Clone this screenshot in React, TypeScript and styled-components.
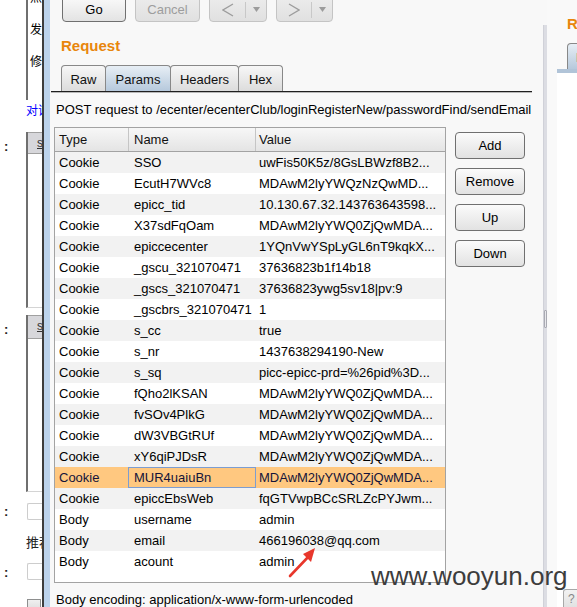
import React from "react";
import styled, { createGlobalStyle } from "styled-components";

const Global = createGlobalStyle`
  html, body { margin: 0; padding: 0; background: #fff; }
  body { font-family: "Liberation Sans", Arial, sans-serif; }
`;

const Root = styled.div`
  position: relative;
  width: 577px;
  height: 607px;
  overflow: hidden;
  display: flex;
  font-family: "Liberation Sans", Arial, sans-serif;
  font-size: 13px;
  color: #000;
  background: #fff;
`;

/* ---------- left strip (web page behind the window) ---------- */
const LeftStrip = styled.div`
  width: 42px;
  flex: none;
  display: flex;
  flex-direction: column;
  overflow: hidden;
  background: #fff;
`;

const TopBox = styled.div`
  margin-left: 26px;
  height: 100px;
  flex: none;
  box-sizing: border-box;
  border-left: 2px solid #6f6f6f;
  padding-left: 2px;
  overflow: hidden;
  font-family: "Noto Sans CJK SC", sans-serif;
  font-size: 12px;
  line-height: 32px;
`;

const CharColumn = styled.div`
  margin-top: -19px;
  display: flex;
  flex-direction: column;
`;

const PageLink = styled.div`
  margin: 2px 0 0 26px;
  line-height: 16px;
  white-space: nowrap;
  color: #0000ff;
  font-family: "Noto Sans CJK SC", sans-serif;
  font-size: 12px;
`;

const FieldRow = styled.div<{ $top: number }>`
  display: flex;
  flex: none;
  margin-top: ${(p) => p.$top}px;
`;

const Colon = styled.div<{ $top: number }>`
  width: 26px;
  flex: none;
  box-sizing: border-box;
  padding-left: 4px;
  margin-top: ${(p) => p.$top}px;
  line-height: 16px;
  font-weight: bold;
  color: #222;
`;

const PanelBox = styled.div<{ $h: number }>`
  flex: 1;
  height: ${(p) => p.$h}px;
  box-sizing: border-box;
  border-left: 2px solid #6f6f6f;
  border-bottom: 1px solid #d4d4d4;
  background: #fff;
`;

const PanelHead = styled.div<{ $h: number }>`
  height: ${(p) => p.$h}px;
  box-sizing: border-box;
  background: #d7d7db;
  border-top: 1px solid #a0a0a0;
  border-bottom: 1px solid #a0a0a0;
  padding-left: 9px;
  font-size: 12px;
  line-height: 20px;
  color: #333;
  text-decoration: underline;
`;

const PageInput = styled.div`
  flex: 1;
  height: 17px;
  box-sizing: border-box;
  margin-left: 1px;
  border: 1px solid #cdcdcd;
  border-right: none;
  border-radius: 2px 0 0 2px;
  background: #fff;
`;

const PageText = styled.div`
  margin: 14px 0 0 26px;
  line-height: 16px;
  white-space: nowrap;
  font-family: "Noto Sans CJK SC", sans-serif;
  font-size: 13px;
  color: #222;
`;

const PageCheck = styled.div`
  margin: 18px 0 0 27px;
  width: 12px;
  height: 12px;
  flex: none;
  border: 1px solid #8e8f8f;
  background: linear-gradient(#f0f0f0, #dadada);
`;

/* ---------- Burp window ---------- */
const Frame = styled.div`
  flex: 1;
  display: flex;
  border-left: 2px solid #3d3d3d;
`;

const FrameEdge = styled.div`
  width: 6px;
  flex: none;
  background: #bcd3ec;
`;

const Workspace = styled.div`
  flex: 1;
  display: flex;
  background: #f8f8f8;
`;

const RequestPane = styled.div`
  width: 493px;
  flex: none;
  display: flex;
  flex-direction: column;
`;

const Toolbar = styled.div`
  height: 22px;
  flex: none;
  display: flex;
  align-items: flex-end;
  gap: 9px;
  padding-left: 12px;
`;

const ToolButton = styled.div<{ $w: number; $disabled?: boolean }>`
  width: ${(p) => p.$w}px;
  height: 26px;
  margin-top: -4px;
  box-sizing: border-box;
  display: flex;
  align-items: center;
  justify-content: center;
  border-radius: 4px;
  border: 1px solid ${(p) => (p.$disabled ? "#c4c4c4" : "#707070")};
  background: ${(p) =>
    p.$disabled
      ? "linear-gradient(#ececec, #e0e0e0)"
      : "linear-gradient(#fafafa, #e3e3e3)"};
  color: ${(p) => (p.$disabled ? "#9d9d9d" : "#000")};
  font-size: 13px;
  padding-top: 1px;
`;

const NavPart = styled.div<{ $main?: boolean }>`
  height: 100%;
  display: flex;
  align-items: center;
  justify-content: center;
  flex: ${(p) => (p.$main ? 1 : "none")};
  width: ${(p) => (p.$main ? "auto" : "21px")};
  border-left: ${(p) => (p.$main ? "none" : "1px solid #c8c8c8")};
  box-sizing: border-box;
  height: 16px;
`;

const PaneTitle = styled.div<{ $pad: number }>`
  margin-top: 15px;
  padding-left: ${(p) => p.$pad}px;
  height: 18px;
  line-height: 18px;
  font-size: 15px;
  font-weight: bold;
  color: #e8860c;
  white-space: nowrap;
`;

const TabStrip = styled.div`
  margin: 10px 11px 0 1px;
  padding-left: 10px;
  display: flex;
  align-items: flex-end;
  border-bottom: 1px solid #1f1f1f;
  box-shadow: 0 1px 0 #b8b8b8;
`;

const Tab = styled.div<{ $w: number; $active?: boolean }>`
  width: ${(p) => p.$w}px;
  height: 26px;
  box-sizing: border-box;
  margin-right: -1px;
  border: 1px solid #888;
  border-bottom: none;
  border-radius: 4px 4px 0 0;
  background: ${(p) =>
    p.$active
      ? "linear-gradient(#e7eef5, #b6c9dc)"
      : "linear-gradient(#f7f7f7, #dcdcdc)"};
  display: flex;
  align-items: center;
  justify-content: center;
  font-size: 13px;
  color: #111;
  padding-top: 1px;
`;

const Content = styled.div`
  margin-left: 1px;
  width: 481px;
  padding: 10px 0 0 3px;
  box-sizing: border-box;
  display: flex;
  flex-direction: column;
`;

const InfoLine = styled.div<{ $top?: number }>`
  margin-left: 2px;
  margin-top: ${(p) => p.$top ?? 0}px;
  line-height: 16px;
  white-space: nowrap;
  color: #000;
`;

const TableArea = styled.div`
  margin-top: 9px;
  display: flex;
  align-items: flex-start;
`;

const Table = styled.div`
  width: 392px;
  height: 456px;
  flex: none;
  box-sizing: border-box;
  border: 1px solid #a3a3a3;
  background: #fff;
  overflow: hidden;
`;

const cols = "74px 127px 1fr";

const HeadRow = styled.div`
  display: grid;
  grid-template-columns: ${cols};
  height: 24px;
  box-sizing: border-box;
  border-bottom: 1px solid #a3a3a3;
  background: linear-gradient(#f7f7f7, #e4e4e4);
`;

const HeadCell = styled.div<{ $last?: boolean; $pad: number }>`
  display: flex;
  align-items: center;
  padding-left: ${(p) => p.$pad}px;
  border-right: ${(p) => (p.$last ? "none" : "1px solid #c5c5c5")};
  color: #111;
`;

const Row = styled.div<{ $alt: boolean; $sel?: boolean }>`
  display: grid;
  grid-template-columns: ${cols};
  height: 21px;
  background: ${(p) => (p.$sel ? "#ffc880" : p.$alt ? "#f2f2f2" : "#ffffff")};
  color: ${(p) => (p.$sel ? "#14143a" : "#000")};
`;

const Cell = styled.div<{ $pad: number; $focus?: boolean }>`
  display: flex;
  align-items: center;
  padding-left: ${(p) => p.$pad}px;
  white-space: nowrap;
  overflow: hidden;
  box-sizing: border-box;
  border: ${(p) => (p.$focus ? "1px solid #7d9dd0" : "none")};
  margin-left: ${(p) => (p.$focus ? "-1px" : "0")};
`;

const SideButtons = styled.div`
  margin: 5px 0 0 9px;
  display: flex;
  flex-direction: column;
  gap: 9px;
`;

const SideButton = styled.div`
  width: 70px;
  height: 27px;
  box-sizing: border-box;
  border: 1px solid #707070;
  border-radius: 4px;
  background: linear-gradient(#fbfbfb, #e2e2e2);
  display: flex;
  align-items: center;
  justify-content: center;
  font-size: 13px;
  color: #000;
`;

const Splitter = styled.div`
  width: 4px;
  flex: none;
  margin-top: 25px;
  box-sizing: border-box;
  background: #dcdde3;
  border-left: 1px solid #d0d1d8;
  display: flex;
  flex-direction: column;
  align-items: center;
`;

const SplitThumb = styled.div`
  margin-top: 285px;
  width: 3px;
  height: 18px;
  box-sizing: border-box;
  border: 1px solid #a9aab2;
  border-radius: 1px;
  background: #e8e8ec;
`;

const ResponsePane = styled.div`
  flex: 1;
  display: flex;
  flex-direction: column;
  background: #f9f9f9;
  overflow: hidden;
`;

const RespTabs = styled.div`
  margin: 10px 0 0 10px;
  padding-left: 10px;
  display: flex;
  border-bottom: 4px solid #b1c4d8;
`;

const RespBody = styled.div`
  margin-left: 10px;
  flex: 1;
  background: #fff;
  display: flex;
  flex-direction: column;
`;

const CornerButton = styled.div`
  margin: auto 0 0 6px;
  width: 40px;
  height: 18px;
  box-sizing: border-box;
  border: 1px solid #a8a8a8;
  border-bottom: none;
  border-radius: 3px 0 0 0;
  background: linear-gradient(#f2f2f2, #e2e2e2);
  color: #888;
  font-size: 12px;
  padding: 2px 0 0 4px;
`;

/* ---------- overlays ---------- */
const Watermark = styled.div`
  position: absolute;
  left: 371px;
  top: 561px;
  font-family: "Liberation Sans", Arial, sans-serif;
  font-size: 26px;
  line-height: 30px;
  color: #3d3d3d;
  white-space: nowrap;
  pointer-events: none;
`;

const ArrowSvg = styled.svg`
  position: absolute;
  left: 284px;
  top: 543px;
`;

type Param = { t: string; n: string; v: string };

const rows: Param[] = [
  { t: "Cookie", n: "SSO", v: "uwFis50K5z/8GsLBWzf8B2..." },
  { t: "Cookie", n: "EcutH7WVc8", v: "MDAwM2lyYWQzNzQwMD..." },
  { t: "Cookie", n: "epicc_tid", v: "10.130.67.32.143763643598..." },
  { t: "Cookie", n: "X37sdFqOam", v: "MDAwM2lyYWQ0ZjQwMDA..." },
  { t: "Cookie", n: "epiccecenter", v: "1YQnVwYSpLyGL6nT9kqkX..." },
  { t: "Cookie", n: "_gscu_321070471", v: "37636823b1f14b18" },
  { t: "Cookie", n: "_gscs_321070471", v: "37636823ywg5sv18|pv:9" },
  { t: "Cookie", n: "_gscbrs_321070471", v: "1" },
  { t: "Cookie", n: "s_cc", v: "true" },
  { t: "Cookie", n: "s_nr", v: "1437638294190-New" },
  { t: "Cookie", n: "s_sq", v: "picc-epicc-prd=%26pid%3D..." },
  { t: "Cookie", n: "fQho2lKSAN", v: "MDAwM2lyYWQ0ZjQwMDA..." },
  { t: "Cookie", n: "fvSOv4PlkG", v: "MDAwM2lyYWQ0ZjQwMDA..." },
  { t: "Cookie", n: "dW3VBGtRUf", v: "MDAwM2lyYWQ0ZjQwMDA..." },
  { t: "Cookie", n: "xY6qiPJDsR", v: "MDAwM2lyYWQ0ZjQwMDA..." },
  { t: "Cookie", n: "MUR4uaiuBn", v: "MDAwM2lyYWQ0ZjQwMDA..." },
  { t: "Cookie", n: "epiccEbsWeb", v: "fqGTVwpBCcSRLZcPYJwm..." },
  { t: "Body", n: "username", v: "admin" },
  { t: "Body", n: "email", v: "466196038@qq.com" },
  { t: "Body", n: "acount", v: "admin" },
];

const SELECTED = 15;

const Chevron = ({ dir }: { dir: "l" | "r" }) => (
  <svg width="12" height="14" viewBox="0 0 12 14">
    <polyline
      points={dir === "l" ? "11,1 1,7 11,13" : "1,1 11,7 1,13"}
      fill="none"
      stroke="#9c9c9c"
      strokeWidth="1.3"
    />
  </svg>
);

const Caret = () => (
  <svg width="7" height="5" viewBox="0 0 7 5">
    <polygon points="0,0 7,0 3.5,5" fill="#9c9c9c" />
  </svg>
);

export default function App() {
  return (
    <Root>
      <Global />
      <LeftStrip>
        <TopBox>
          <CharColumn>
            <span>点</span>
            <span>发</span>
            <span>修</span>
          </CharColumn>
        </TopBox>
        <PageLink>对话框</PageLink>
        <FieldRow $top={14}>
          <Colon $top={7}>:</Colon>
          <PanelBox $h={176}>
            <PanelHead $h={22}>s</PanelHead>
          </PanelBox>
        </FieldRow>
        <FieldRow $top={7}>
          <Colon $top={7}>:</Colon>
          <PanelBox $h={177}>
            <PanelHead $h={24}>s</PanelHead>
          </PanelBox>
        </FieldRow>
        <FieldRow $top={11}>
          <Colon $top={1}>:</Colon>
          <PageInput />
        </FieldRow>
        <PageText>推荐</PageText>
        <FieldRow $top={13}>
          <Colon $top={2}>:</Colon>
          <PageInput />
        </FieldRow>
        <PageCheck />
      </LeftStrip>

      <Frame>
        <FrameEdge />
        <Workspace>
          <RequestPane>
            <Toolbar>
              <ToolButton $w={64}>Go</ToolButton>
              <ToolButton $w={65} $disabled>
                Cancel
              </ToolButton>
              <ToolButton $w={58} $disabled>
                <NavPart $main>
                  <Chevron dir="l" />
                </NavPart>
                <NavPart>
                  <Caret />
                </NavPart>
              </ToolButton>
              <ToolButton $w={57} $disabled>
                <NavPart $main>
                  <Chevron dir="r" />
                </NavPart>
                <NavPart>
                  <Caret />
                </NavPart>
              </ToolButton>
            </Toolbar>
            <PaneTitle $pad={11}>Request</PaneTitle>
            <TabStrip>
              <Tab $w={45}>Raw</Tab>
              <Tab $w={66} $active>
                Params
              </Tab>
              <Tab $w={69}>Headers</Tab>
              <Tab $w={45}>Hex</Tab>
            </TabStrip>
            <Content>
              <InfoLine>
                POST request to /ecenter/ecenterClub/loginRegisterNew/passwordFind/sendEmail
              </InfoLine>
              <TableArea>
                <Table>
                  <HeadRow>
                    <HeadCell $pad={4}>Type</HeadCell>
                    <HeadCell $pad={5}>Name</HeadCell>
                    <HeadCell $pad={3} $last>
                      Value
                    </HeadCell>
                  </HeadRow>
                  {rows.map((r, i) => (
                    <Row key={i} $alt={i % 2 === 0} $sel={i === SELECTED}>
                      <Cell $pad={4}>{r.t}</Cell>
                      <Cell $pad={5} $focus={i === SELECTED}>
                        {r.n}
                      </Cell>
                      <Cell $pad={3}>{r.v}</Cell>
                    </Row>
                  ))}
                </Table>
                <SideButtons>
                  <SideButton>Add</SideButton>
                  <SideButton>Remove</SideButton>
                  <SideButton>Up</SideButton>
                  <SideButton>Down</SideButton>
                </SideButtons>
              </TableArea>
              <InfoLine $top={9}>Body encoding: application/x-www-form-urlencoded</InfoLine>
            </Content>
          </RequestPane>
          <Splitter>
            <SplitThumb />
          </Splitter>
          <ResponsePane>
            <PaneTitle $pad={20}>Response</PaneTitle>
            <RespTabs>
              <Tab $w={44} $active>
                Raw
              </Tab>
            </RespTabs>
            <RespBody>
              <CornerButton>?</CornerButton>
            </RespBody>
          </ResponsePane>
        </Workspace>
      </Frame>

      <Watermark>www.wooyun.org</Watermark>
      <ArrowSvg width="36" height="38" viewBox="0 0 36 38">
        <line x1="6" y1="33" x2="26" y2="12" stroke="#e8372c" strokeWidth="2.6" strokeLinecap="round" />
        <polygon points="31,5 19,11 27,19" fill="#e8372c" />
      </ArrowSvg>
    </Root>
  );
}
